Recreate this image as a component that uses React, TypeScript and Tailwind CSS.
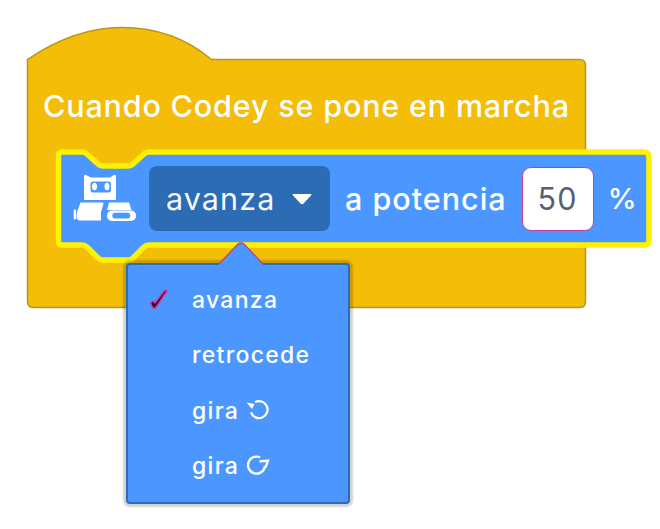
const menuItems = [
  { label: "avanza", checked: true },
  { label: "retrocede" },
  { label: "gira", icon: "ccw" },
  { label: "gira", icon: "cw" },
];

function BlockShapes() {
  return (
    <svg className="absolute inset-0" width="660" height="529" viewBox="0 0 660 529">
      {/* hat block */}
      <path
        d="M27.5 59.5 C62 36 92 27.5 122 27.5 C155 27.5 186 38 211.5 59.5 L579.5 59.5 Q585.5 59.5 585.5 65.5 L585.5 301.5 Q585.5 307.5 579.5 307.5 L33.5 307.5 Q27.5 307.5 27.5 301.5 Z"
        fill="#f4bd07"
        stroke="#b8961c"
        strokeWidth="1.5"
      />
      {/* selected stack block */}
      <path
        d="M62 152 L82 152 Q85 152 87 154 L98 164 Q100 166 103 166 L128 166 Q131 166 133 164 L144 154 Q146 152 149 152 L644 152 Q649 152 649 157 L649 241 Q649 245 644 245 L149 245 Q146 245 144 247 L133 258 Q131 260 128 260 L103 260 Q100 260 98 258 L87 247 Q85 245 82 245 L62 245 Q58.5 245 58.5 241 L58.5 156 Q58.5 152 62 152 Z"
        fill="#4c97ff"
        stroke="#fff200"
        strokeWidth="5.5"
        strokeLinejoin="round"
      />
    </svg>
  );
}

function CodeyIcon() {
  return (
    <svg width="66" height="50" viewBox="0 0 66 50" fill="#fff" className="shrink-0">
      <path d="M13 2 Q13 0.5 15 1 L20 3.5 L39 3.5 L43 1 Q45 0.5 45 2 L45 25 Q45 26 44 26 L14 26 Q13 26 13 25 Z" />
      <rect x="19.5" y="7.5" width="20.5" height="11" rx="2.5" fill="#4c97ff" />
      <ellipse cx="23.5" cy="12.5" rx="2.5" ry="3.7" />
      <ellipse cx="36" cy="12.5" rx="2.5" ry="3.7" />
      <path d="M9.5 28.5 L31 28.5 Q33 28.5 32.5 30 L30 38 L30 46.5 L9 46.5 Q6 46.5 5.5 43 L6 38 Z" />
      <rect x="2.7" y="35.5" width="2.4" height="10" rx="1.2" />
      <path d="M38 28.5 L58 28.5 L60.5 36 L36 36 Z" />
      <rect x="36" y="36.5" width="29" height="10.5" rx="5" />
      <rect x="41.3" y="38.7" width="18" height="5.8" rx="2.9" fill="#4c97ff" />
    </svg>
  );
}

function RotateGlyph({ dir }: { dir: string }) {
  return (
    <svg width="24" height="24" viewBox="0 0 24 24" fill="none" stroke="#fff" strokeWidth="2.3" className="ml-[7px]">
      {dir === "ccw" ? (
        <g>
          <path d="M9 3.1 A8.5 8.5 0 1 1 5 13.4" />
          <path d="M0.5 3.5 L8.5 5 L6 10 Z" fill="#fff" stroke="none" />
        </g>
      ) : (
        <g>
          <path d="M14 2.3 A8.5 8.5 0 1 0 19 11" />
          <path d="M13.5 6.5 L22 5.5 L19.5 12.5" />
        </g>
      )}
    </svg>
  );
}

function Dropdown() {
  return (
    <div className="absolute left-[126px] top-[263px] h-[241px] w-[224px] rounded-[4px] border-2 border-[#2b6cb5] bg-[#4c97ff] shadow-[0_0_2px_3px_rgba(0,0,0,0.18)]">
      {/* arrow */}
      <svg className="absolute left-[88px] top-[-23px]" width="50" height="24" viewBox="0 0 50 24">
        <path d="M3 22 L21 3 Q25 -1 29 3 L47 22 L47 24 L3 24 Z" fill="#4c97ff" />
        <path d="M3 22 L21 3 Q25 -1 29 3 L47 22" fill="none" stroke="#c73b7e" strokeWidth="1.2" />
      </svg>
      <ul className="flex flex-col pt-[7px]">
        {menuItems.map((item, i) => (
          <li key={i} className="flex h-[55.6px] items-center text-[23px] font-medium tracking-[1.3px] text-white">
            <span className="flex w-[64px] pl-[20px]">
              {item.checked && (
                <svg width="22" height="24" viewBox="0 0 22 24">
                  <path
                    d="M2.5 15 L5 13 L7 15 L17 2 L19 3 L7.5 20 L5 20 Z"
                    fill="#1a1030"
                    stroke="#d6339a"
                    strokeWidth="1.5"
                    strokeLinejoin="round"
                  />
                </svg>
              )}
            </span>
            {item.label}
            {item.icon && <RotateGlyph dir={item.icon} />}
          </li>
        ))}
      </ul>
    </div>
  );
}

export default function App() {
  return (
    <div className="relative h-[529px] w-[660px] overflow-hidden bg-white font-['Inter',sans-serif]">
      <BlockShapes />
      <div className="relative flex flex-col pl-[43px] pt-[86px]">
        <div className="text-[30.5px] leading-[40px] font-medium tracking-[0.83px] text-white">Cuando Codey se pone en marcha</div>
        <div className="ml-[28px] mt-[40px] flex h-[65px] items-center">
          <CodeyIcon />
          <div className="ml-[12px] flex h-[65px] w-[181px] items-center rounded-[8px] bg-[#2b6cb5] pl-[17px] text-[30.5px] tracking-[1.1px] text-[#f4f7fb]">
            avanza
            <svg width="22" height="12" viewBox="0 0 22 12" className="ml-[16px]">
              <path d="M2 1 L20 1 Q21 1 20 2.5 L12.5 10.5 Q11 12 9.5 10.5 L2 2.5 Q1 1 2 1 Z" fill="#fff" />
            </svg>
          </div>
          <span className="ml-[15px] text-[30.5px] font-medium tracking-[1px] text-white">a potencia</span>
          <div className="ml-[15px] flex h-[64px] w-[72px] items-center justify-center rounded-[9px] border border-[#c73b9a] bg-white text-[30.5px] tracking-[1.3px] text-[#575e75]">
            50
          </div>
          <span className="ml-[14px] text-[29px] font-medium text-white">%</span>
        </div>
      </div>
      <Dropdown />
    </div>
  );
}
